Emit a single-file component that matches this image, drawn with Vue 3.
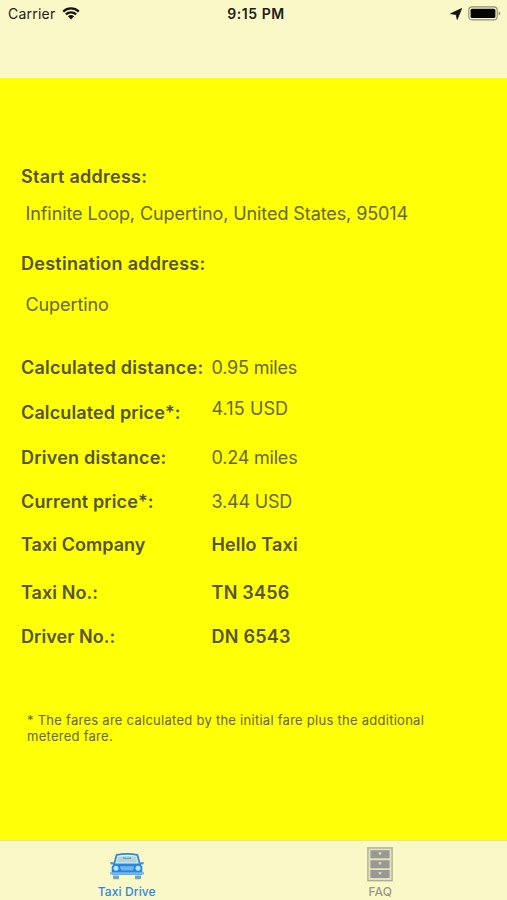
<script setup>
const rows = [
  { label: 'Calculated distance:', value: '0.95 miles', key: 'distance' },
  { label: 'Calculated price*:', value: '4.15 USD', key: 'price' },
  { label: 'Driven distance:', value: '0.24 miles', key: 'driven' },
  { label: 'Current price*:', value: '3.44 USD', key: 'current' },
  { label: 'Taxi Company', value: 'Hello Taxi', key: 'company', strong: true },
  { label: 'Taxi No.:', value: 'TN 3456', key: 'taxi', strong: true },
  { label: 'Driver No.:', value: 'DN 6543', key: 'driver', strong: true },
]
</script>

<template>
  <div class="screen">
    <header class="top">
      <div class="carrier">
        <span>Carrier</span>
        <svg class="wifi" viewBox="0 0 18 13">
          <path d="M1.2 4.6a11.2 11.2 0 0 1 15.6 0M3.9 7.4a7.3 7.3 0 0 1 10.2 0" fill="none" stroke="#171713" stroke-width="2.3" />
          <path d="M5.9 9.3a4.6 4.6 0 0 1 6.2 0L9 12.5Z" fill="#171713" />
        </svg>
      </div>
      <div class="time">9:15 PM</div>
      <div class="power">
        <svg class="arrow" viewBox="0 0 12 12"><path d="M11.6.5 7.2 11.4 6.2 6.5.6 5.7Z" fill="#11110d" stroke="#11110d" stroke-width=".8" stroke-linejoin="round" /></svg>
        <svg class="battery" viewBox="0 0 33 15">
          <rect x=".8" y=".9" width="28.4" height="13" rx="3.4" fill="none" stroke="#8e8c70" stroke-width="1.1" />
          <rect x="2.6" y="2.7" width="24.8" height="9.4" rx="1.6" fill="#050504" />
          <path d="M30.7 5.2q1.5.6 1.5 2.2t-1.5 2.2Z" fill="#8e8c70" />
        </svg>
      </div>
    </header>

    <main class="content">
      <h2 class="start">Start address:</h2>
      <p class="address from">Infinite Loop, Cupertino, United States, 95014</p>
      <h2 class="destination">Destination address:</h2>
      <p class="address to">Cupertino</p>
      <dl class="details">
        <div v-for="row in rows" :key="row.key" class="row" :class="[row.key, { strong: row.strong }]">
          <dt>{{ row.label }}</dt>
          <dd>{{ row.value }}</dd>
        </div>
      </dl>
      <p class="note">* The fares are calculated by the initial fare plus the additional<br />metered fare.</p>
    </main>

    <nav class="tabs">
      <div class="tab active">
        <svg class="car" viewBox="0 0 36 28">
          <path d="M7.7 1.8Q18 .1 28.3 1.8L31 11.3H5Z" fill="#f0f2d2" stroke="#2788e2" stroke-width="1.8" stroke-linejoin="round" />
          <path d="M9 3.7Q18 2.3 27 3.7l1.5 5.8h-21Z" fill="#b3d5d9" />
          <path d="M14 4.3q4 1.5 8 0v1.4h-8Z" fill="#408fdc" />
          <path d="M5 11.2 2.7 13.4v8.3h30.6v-8.3L31 11.2Z" fill="#2386e5" />
          <path d="M.8 9.2h3.5l.7 2.3H2Zm34.4 0h-3.5l-.7 2.3h3Z" fill="#3e8fda" />
          <circle cx="7" cy="15.3" r="2.5" fill="#bee5ff" />
          <circle cx="29" cy="15.3" r="2.5" fill="#bee5ff" />
          <path d="M11 13.5h14l-1.3 3.8H12.3Z" fill="#9fd0f5" />
          <path d="M11.8 14.8h12.4M12.2 16.2h11.6" stroke="#3688d6" stroke-width=".6" />
          <path d="M1 19.3h34v2.3H1Z" fill="#76b9ed" />
          <path d="M4 22.6h6v3.7H5q-1 0-1-1Zm22 0h6v2.7q0 1-1 1h-5Z" fill="#74a7bf" />
        </svg>
        <span>Taxi Drive</span>
      </div>
      <div class="tab faq">
        <svg class="cabinet" viewBox="0 0 26 35">
          <rect x=".9" y=".9" width="24.2" height="32.8" fill="#e5e2bd" stroke="#aaa994" stroke-width="1.3" />
          <path d="M3.4 3.3h19.2v8H3.4Zm0 9.9h19.2v8H3.4Zm0 9.9h19.2v8H3.4Z" fill="#989894" />
          <path d="M11.7 5.7h2.6l-1.3 2Zm0 9.9h2.6l-1.3 2Zm0 9.9h2.6l-1.3 2Z" fill="#efecd0" stroke="#efecd0" stroke-width=".5" />
        </svg>
        <span>FAQ</span>
      </div>
    </nav>
  </div>
</template>

<style>
body { margin: 0; }
</style>

<style scoped>
.screen {
  width: 507px;
  height: 900px;
  display: flex;
  flex-direction: column;
  background: #ffff08;
  color: #56542c;
  font-family: Inter, "Liberation Sans", sans-serif;
  overflow: hidden;
}
.top {
  box-sizing: border-box;
  height: 78px;
  padding: 4px 6px 0 8px;
  display: grid;
  grid-template-columns: 1fr 60px 1fr;
  align-items: start;
  background: #fbf8c8;
  color: #20201a;
  font-size: 14px;
  line-height: 20px;
}
.carrier { display: flex; align-items: center; gap: 6.5px; height: 20px; letter-spacing: .22px; }
.wifi { width: 18px; height: 13px; margin-top: -2px; }
.time { font-weight: 600; white-space: nowrap; justify-self: center; letter-spacing: .55px; padding-left: 3px; }
.power { display: flex; justify-content: flex-end; align-items: center; height: 20px; gap: 6.5px; }
.arrow { width: 12px; height: 12px; }
.battery { width: 33px; height: 15px; margin-top: -2px; }
.content { height: 762px; padding: 87px 21px 0; box-sizing: border-box; font-size: 18px; line-height: 24px; }
h2, p, dl, dt, dd { margin: 0; }
h2 { font-size: 18px; font-weight: 600; line-height: 24px; letter-spacing: .26px; }
.address { padding-left: 4.5px; white-space: nowrap; color: #68662b; letter-spacing: -.09px; }
.from { margin-top: 13px; }
.destination { margin-top: 26px; }
.to { margin-top: 17px; }
.details { margin-top: 39px; }
.row { display: grid; grid-template-columns: 190.5px 1fr; height: 45px; }
dt { font-weight: 600; white-space: nowrap; letter-spacing: .22px; }
dd { color: #68662b; white-space: nowrap; letter-spacing: -.2px; }
.price dt, .current dt { letter-spacing: .13px; }
.price dd { margin-top: -4px; letter-spacing: .1px; }
.driven { height: 44px; }
.current { height: 43px; }
.company { height: 48px; }
.company dt { letter-spacing: .05px; }
.taxi { height: 44px; }
.taxi dt, .driver dt { letter-spacing: .06px; }
.driver { height: 24px; }
.strong dd { font-weight: 600; color: #56542c; letter-spacing: .25px; }
.company.strong dd { letter-spacing: .14px; }
.note { margin-top: 63px; padding-left: 6px; font-size: 13px; line-height: 16px; letter-spacing: .265px; white-space: nowrap; color: #696625; }
.tabs { height: 60px; box-sizing: border-box; border-top: 1px solid #e6e2a6; background: #fbf8c8; display: grid; grid-template-columns: 1fr 1fr; }
.tab { display: flex; flex-direction: column; align-items: center; font-size: 12px; line-height: 14px; font-weight: 500; color: #98978a; }
.active { color: #2c88df; }
.car { width: 36px; height: 28px; margin-top: 12px; }
.active span { margin-top: 4px; letter-spacing: .12px; }
.cabinet { width: 26px; height: 35px; margin-top: 6px; }
.faq span { margin-top: 3px; letter-spacing: .1px; }
</style>
